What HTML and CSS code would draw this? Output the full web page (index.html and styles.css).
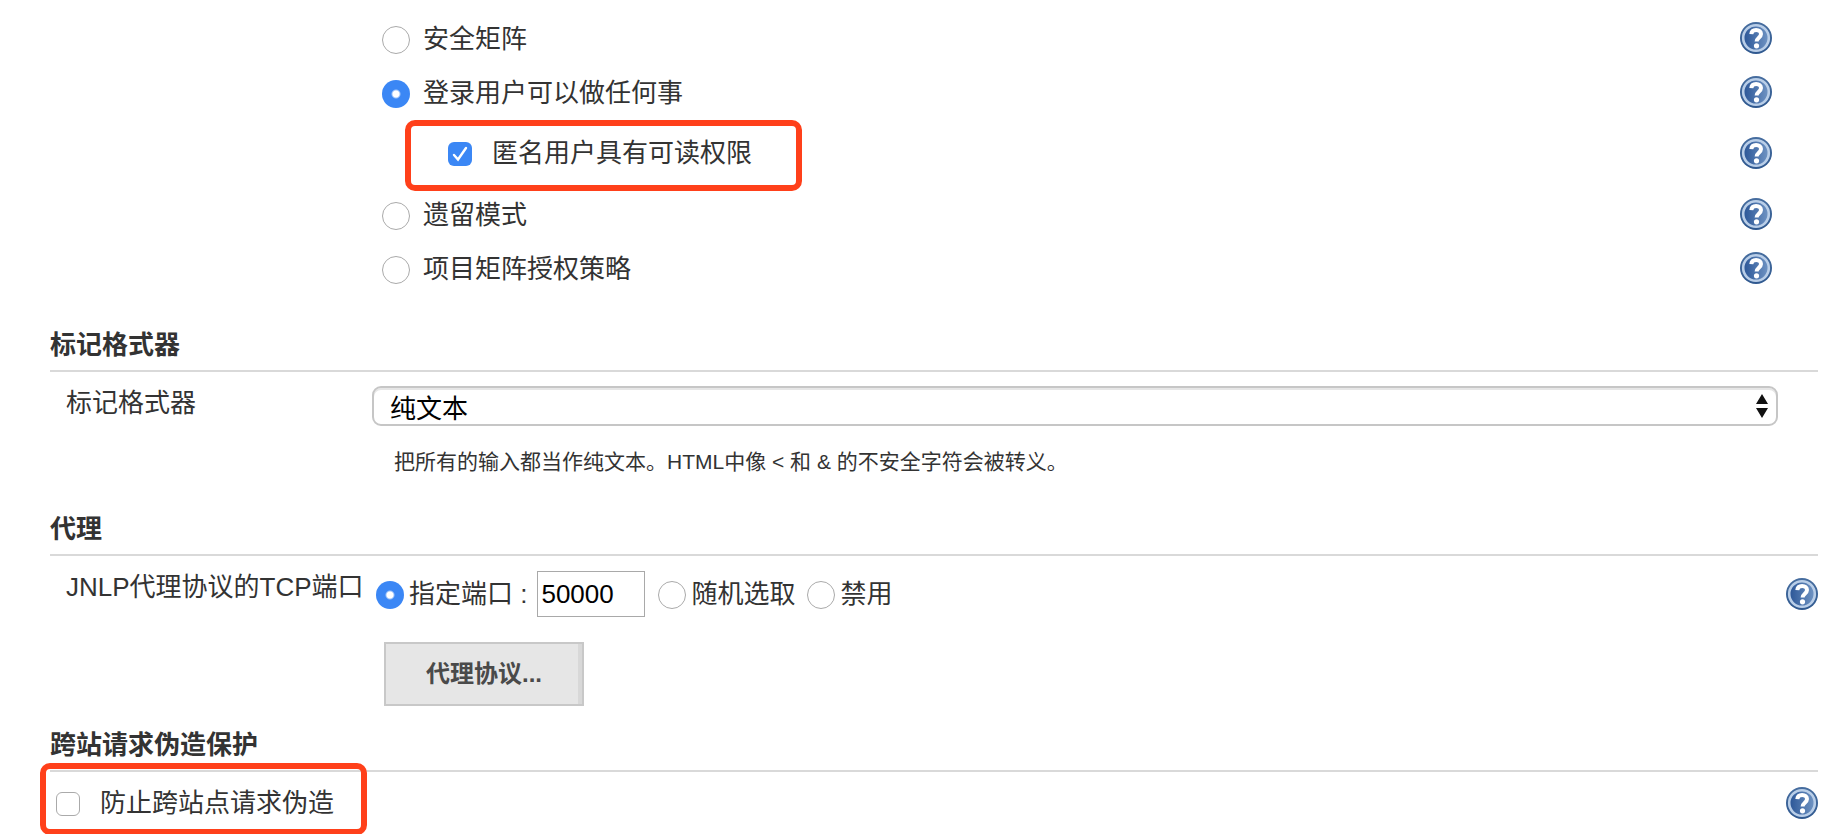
FILE: index.html
```html
<!DOCTYPE html>
<html lang="zh-CN">
<head>
<meta charset="utf-8">
<title>全局安全配置</title>
<link rel="stylesheet" href="styles.css">
</head>
<body>
<svg class="defs" aria-hidden="true">
  <defs>
    <linearGradient id="rim" x1="0" y1="0" x2="0" y2="1">
      <stop offset="0" stop-color="#466d9f"/>
      <stop offset="1" stop-color="#2f588f"/>
    </linearGradient>
    <linearGradient id="disc" x1="0" y1="0" x2="1" y2="0">
      <stop offset="0" stop-color="#2a5596"/>
      <stop offset="1" stop-color="#7195c4"/>
    </linearGradient>
    <symbol id="help" viewBox="0 0 32 32">
      <circle cx="16" cy="16" r="16" fill="url(#rim)"/>
      <circle cx="16" cy="16" r="12.8" fill="url(#disc)" stroke="#b9cee8" stroke-width="2.6"/>
      <path d="M11.3 12.2C11.5 9.2 13.3 8 16.1 8c2.9 0 4.9 1.6 4.9 4 0 3.7-4.4 3.7-4.4 7.6" fill="none" stroke="#fff" stroke-width="4"/>
      <circle cx="16.5" cy="23.8" r="2.6" fill="#fff"/>
    </symbol>
  </defs>
</svg>
<form class="config">
  <fieldset class="strategies">
    <div class="row">
      <label class="choice"><input class="radio" type="radio" name="strategy"><span class="choice-text">安全矩阵</span></label>
      <button class="help" type="button" aria-label="帮助"><svg class="help-icon"><use href="#help"/></svg></button>
    </div>
    <div class="row">
      <label class="choice"><input class="radio" type="radio" name="strategy" checked><span class="choice-text">登录用户可以做任何事</span></label>
      <button class="help" type="button" aria-label="帮助"><svg class="help-icon"><use href="#help"/></svg></button>
    </div>
    <div class="row row-nested">
      <label class="choice choice-check marked marked-nested"><input class="check" type="checkbox" checked><span>匿名用户具有可读权限</span></label>
      <button class="help" type="button" aria-label="帮助"><svg class="help-icon"><use href="#help"/></svg></button>
    </div>
    <div class="row">
      <label class="choice"><input class="radio" type="radio" name="strategy"><span class="choice-text">遗留模式</span></label>
      <button class="help" type="button" aria-label="帮助"><svg class="help-icon"><use href="#help"/></svg></button>
    </div>
    <div class="row">
      <label class="choice"><input class="radio" type="radio" name="strategy"><span class="choice-text">项目矩阵授权策略</span></label>
      <button class="help" type="button" aria-label="帮助"><svg class="help-icon"><use href="#help"/></svg></button>
    </div>
  </fieldset>

  <section class="section-formatter">
    <h2 class="heading">标记格式器</h2>
    <div class="setting">
      <label class="name" for="formatter">标记格式器</label>
      <div class="field">
        <div class="select-wrap">
          <select class="select" id="formatter"><option>纯文本</option></select>
          <svg class="arrows" viewBox="0 0 12 24" aria-hidden="true"><path d="M6 0l6 10H0zM6 24L0 14h12z" fill="#111"/></svg>
        </div>
        <p class="note">把所有的输入都当作纯文本。HTML中像 &lt; 和 &amp; 的不安全字符会被转义。</p>
      </div>
    </div>
  </section>

  <section class="section-agents">
    <h2 class="heading">代理</h2>
    <div class="setting">
      <span class="name">JNLP代理协议的TCP端口</span>
      <div class="ports">
        <div class="port-row">
          <label class="port"><input class="radio" type="radio" name="port" checked><span>指定端口 :</span></label>
          <input class="number" type="text" value="50000" aria-label="端口">
          <label class="port"><input class="radio" type="radio" name="port"><span>随机选取</span></label>
          <label class="port"><input class="radio" type="radio" name="port"><span>禁用</span></label>
          <button class="help" type="button" aria-label="帮助"><svg class="help-icon"><use href="#help"/></svg></button>
        </div>
        <button class="protocols" type="button">代理协议...</button>
      </div>
    </div>
  </section>

  <section class="section-csrf">
    <h2 class="heading">跨站请求伪造保护</h2>
    <div class="row row-csrf">
      <label class="choice choice-check marked marked-csrf"><input class="check" type="checkbox"><span>防止跨站点请求伪造</span></label>
      <button class="help" type="button" aria-label="帮助"><svg class="help-icon"><use href="#help"/></svg></button>
    </div>
  </section>
</form>
</body>
</html>
```
FILE: styles.css
```css
* {
  box-sizing: border-box;
}

body {
  margin: 0;
  background: #fff;
  color: #333;
  font: 26px/38px "Liberation Sans", "Noto Sans CJK SC", sans-serif;
}

.defs {
  position: absolute;
  width: 0;
  height: 0;
}

.config {
  padding: 11px 18px 0 50px;
}

.strategies {
  margin: 0;
  padding: 0 46px 0 332px;
  border: 0;
}

.row {
  display: flex;
  align-items: center;
  justify-content: space-between;
  height: 54px;
}

.row-nested {
  height: 68px;
  padding-left: 66px;
}

.choice {
  display: flex;
  align-items: center;
  gap: 13px;
}

.choice-text {
  padding-top: 2px;
}

.choice-check {
  gap: 20px;
}

.radio,
.check {
  appearance: none;
  flex: none;
  margin: 0;
  border: 1px solid #aaa;
  background: #fff;
}

.radio {
  width: 28px;
  height: 28px;
  margin-top: 4px;
  border-radius: 50%;
}

.radio:checked {
  border: 0;
  background: radial-gradient(circle, #fff 3px, #3b87f5 5px);
}

.check {
  width: 24px;
  height: 24px;
  margin-top: 2px;
  border-radius: 6px;
}

.check:checked {
  border: 0;
  background: #3b87f5 url("data:image/svg+xml,%3Csvg xmlns='http://www.w3.org/2000/svg' viewBox='0 0 24 24'%3E%3Cpath d='M6 13l4 4.5L18 6' fill='none' stroke='white' stroke-width='2.4' stroke-linecap='round'/%3E%3C/svg%3E");
}

.help {
  flex: none;
  width: 32px;
  height: 32px;
  padding: 0;
  border: 0;
  background: none;
}

.help-icon {
  display: block;
  width: 32px;
  height: 32px;
}

.marked {
  position: relative;
}

.marked::after {
  content: "";
  position: absolute;
  border: 6px solid #ff401a;
  border-radius: 10px;
  pointer-events: none;
}

.marked-nested::after {
  inset: -14px -50px -19px -43px;
}

.marked-csrf::after {
  inset: -21px -33px -13px -16px;
}

.heading {
  margin: 0;
  padding-bottom: 5px;
  border-bottom: 2px solid #d9d9d9;
  font-size: 26px;
  line-height: 40px;
}

.section-formatter {
  padding-top: 30px;
}

.section-agents {
  padding-top: 31px;
}

.section-csrf {
  padding-top: 19px;
}

.setting {
  display: grid;
  grid-template-columns: 306px minmax(0, 1fr);
  padding-left: 16px;
}

.name {
  padding-top: 12px;
  white-space: nowrap;
}

.field {
  padding: 14px 40px 0 0;
}

.select-wrap {
  position: relative;
}

.select {
  display: block;
  appearance: none;
  width: 100%;
  height: 40px;
  padding: 4px 40px 0 16px;
  border: 2px solid #c6c6c6;
  border-radius: 9px;
  background: #fff;
  box-shadow: inset 0 2px #e6e6e6;
  color: #000;
  font: inherit;
  line-height: 34px;
}

.arrows {
  position: absolute;
  top: 8px;
  right: 10px;
  width: 12px;
  height: 24px;
  pointer-events: none;
}

.note {
  margin: 0;
  padding: 20px 0 0 22px;
  font-size: 21px;
  line-height: 32px;
}

.ports {
  padding-top: 15px;
}

.port-row {
  display: flex;
  align-items: center;
  height: 46px;
  padding-left: 4px;
}

.port {
  display: flex;
  align-items: center;
  gap: 5px;
  margin-right: 12px;
}

.port .radio {
  margin-top: 2px;
}

.port:first-child {
  margin-right: 10px;
}

.number {
  width: 108px;
  height: 46px;
  margin-right: 13px;
  padding: 0 3px;
  border: 1px solid #a9a9a9;
  background: #fff;
  color: #000;
  font: inherit;
}

.port-row .help {
  margin-left: auto;
}

.protocols {
  display: block;
  height: 64px;
  margin: 25px 0 0 12px;
  padding: 0 40px;
  border: 2px solid #c8c8c8;
  background: #e6e6e6;
  box-shadow: inset -4px 0 #d8d8d8;
  color: #4a4a4a;
  font: bold 24px/36px "Liberation Sans", "Noto Sans CJK SC", sans-serif;
}

.row-csrf {
  height: 62px;
  padding-left: 6px;
}
```
